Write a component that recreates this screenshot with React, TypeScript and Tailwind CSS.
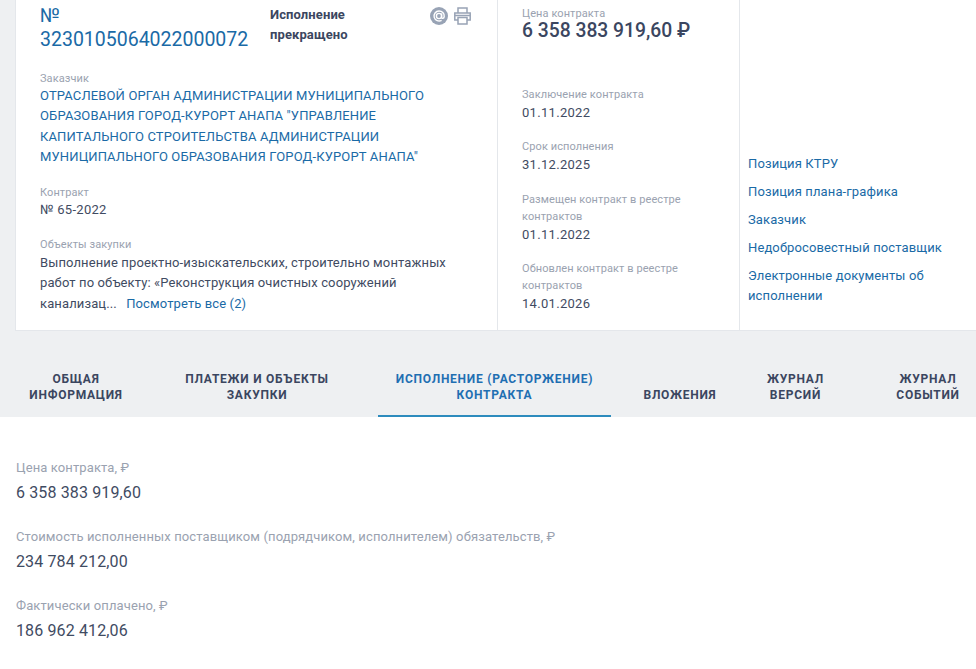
const font = "font-['Roboto',sans-serif]";

function Label({ children }: { children: React.ReactNode }) {
  return <div className="text-[11px] leading-[17px] tracking-[0.09px] text-[#9aa2b0]">{children}</div>;
}

function SideItem({ label, value }: { label: React.ReactNode; value: string }) {
  return (
    <div>
      <Label>{label}</Label>
      <div className="text-[13px] leading-[20px] tracking-[0.3px] text-[#3f4b62]">{value}</div>
    </div>
  );
}

function Tab({ children, active, className }: { children: React.ReactNode; active?: boolean; className: string }) {
  return (
    <div
      className={
        className +
        ' flex h-[64px] shrink-0 items-end justify-center text-center text-[12px] font-bold uppercase leading-[16px] tracking-[0.75px] ' +
        (active ? 'border-b-2 border-[#2d8bbd] pb-[12px] text-[#1f6fb2]' : 'pb-[14px] text-[#3b4660]')
      }
    >
      <span>{children}</span>
    </div>
  );
}

function Amount({ label, value }: { label: string; value: string }) {
  return (
    <div>
      <div className="text-[13px] leading-[20px] tracking-[0.12px] text-[#9aa2b0]">{label}</div>
      <div className="mt-[3px] text-[16px] leading-[24px] tracking-[0.13px] text-[#3f4b62]">{value}</div>
    </div>
  );
}

export default function App() {
  const links = ['Позиция КТРУ', 'Позиция плана-графика', 'Заказчик', 'Недобросовестный поставщик'];
  return (
    <div className={font + ' h-[669px] w-[976px] overflow-hidden bg-white'}>
      <div className="bg-[#eef0f2]">
        <div className="ml-[15px] flex h-[331px] border-b border-l border-[#e4e7eb] bg-white">
          <div className="w-[481px] shrink-0 pl-[24px] pr-[20px] pt-[4px]">
            <div className="flex">
              <div className="w-[230px] shrink-0 text-[19.5px] leading-[24px] text-[#1a6aa6]">
                №<br />
                3230105064022000072
              </div>
              <div className="mt-[1px] w-[160px] text-[13px] font-bold leading-[20px] tracking-[0.1px] text-[#3b4660]">
                Исполнение<br />
                прекращено
              </div>
              <div className="flex h-[22px] gap-[6px] text-[#98a3b5]">
                <svg width="18" height="18" viewBox="0 0 18 18" className="mt-[3px]">
                  <circle cx="9" cy="9" r="9" fill="currentColor" />
                  <circle cx="9" cy="9" r="2.6" fill="none" stroke="#fff" strokeWidth="1.4" />
                  <path d="M11.6 6.4v3.8c0 1.6 2.4 1.6 2.6-.6.4-3.4-2.2-5.6-5.2-5.6a5 5 0 1 0 2.6 9.3" fill="none" stroke="#fff" strokeWidth="1.4" />
                </svg>
                <svg width="17" height="18" viewBox="0 0 17 18" fill="none" stroke="currentColor" strokeWidth="1.5" className="mt-[3px]">
                  <path d="M4 5.5V1h9v4.5M4 13H.8V6h15.4v7H13" />
                  <path d="M4 10.5h9V17H4z" />
                  <path d="M.8 8.5h15.4" />
                </svg>
              </div>
            </div>
            <div className="mt-[18px]">
              <Label>Заказчик</Label>
              <div className="-mt-[1px] text-[13px] leading-[20.4px] tracking-[0.14px] text-[#1a6aa6]">
                ОТРАСЛЕВОЙ ОРГАН АДМИНИСТРАЦИИ МУНИЦИПАЛЬНОГО<br />
                ОБРАЗОВАНИЯ ГОРОД-КУРОРТ АНАПА "УПРАВЛЕНИЕ<br />
                КАПИТАЛЬНОГО СТРОИТЕЛЬСТВА АДМИНИСТРАЦИИ<br />
                МУНИЦИПАЛЬНОГО ОБРАЗОВАНИЯ ГОРОД-КУРОРТ АНАПА"
              </div>
            </div>
            <div className="mt-[16px]">
              <Label>Контракт</Label>
              <div className="-mt-[1px] text-[13px] leading-[20px] tracking-[0.3px] text-[#3f4b62]">№ 65-2022</div>
            </div>
            <div className="mt-[16px]">
              <Label>Объекты закупки</Label>
              <div className="text-[13px] leading-[20.5px] tracking-[0.12px] text-[#3f4b62]">
                Выполнение проектно-изыскательских, строительно монтажных<br />
                работ по объекту: «Реконструкция очистных сооружений<br />
                канализац... <span className="ml-[6px] text-[#1a6aa6]">Посмотреть все (2)</span>
              </div>
            </div>
          </div>
          <div className="w-[242px] shrink-0 border-l border-[#e4e7eb] pl-[24px] pt-[5px]">
            <Label>Цена контракта</Label>
            <div className="-mt-[3px] text-[19.3px] font-medium leading-[24px] text-[#3b4660]">6 358 383 919,60 ₽</div>
            <div className="mt-[43px] flex flex-col gap-[15.4px]">
              <SideItem label="Заключение контракта" value="01.11.2022" />
              <SideItem label="Срок исполнения" value="31.12.2025" />
              <SideItem label={<>Размещен контракт в реестре<br />контрактов</>} value="01.11.2022" />
              <SideItem label={<>Обновлен контракт в реестре<br />контрактов</>} value="14.01.2026" />
            </div>
          </div>
          <div className="flex-1 border-l border-[#e4e7eb] pl-[8px] pt-[154px] text-[13px] leading-[20px] tracking-[0.12px] text-[#1a6aa6]">
            <div className="flex flex-col gap-[8px]">
              {links.map((l) => (
                <div key={l}>{l}</div>
              ))}
              <div>
                Электронные документы об<br />
                исполнении
              </div>
            </div>
          </div>
        </div>
        <div className="flex h-[86px] items-end">
          <Tab className="w-[152px]">Общая<br />информация</Tab>
          <Tab className="mr-[16px] w-[210px]">Платежи и объекты<br />закупки</Tab>
          <Tab className="w-[233px]" active>Исполнение (расторжение)<br />контракта</Tab>
          <Tab className="w-[138px]">Вложения</Tab>
          <Tab className="w-[93px]">Журнал<br />версий</Tab>
          <Tab className="ml-[19px] w-[134px]">Журнал<br />событий</Tab>
        </div>
      </div>
      <div className="flex flex-col gap-[22px] pl-[16px] pt-[41px]">
        <Amount label="Цена контракта, ₽" value="6 358 383 919,60" />
        <Amount label="Стоимость исполненных поставщиком (подрядчиком, исполнителем) обязательств, ₽" value="234 784 212,00" />
        <Amount label="Фактически оплачено, ₽" value="186 962 412,06" />
      </div>
    </div>
  );
}
